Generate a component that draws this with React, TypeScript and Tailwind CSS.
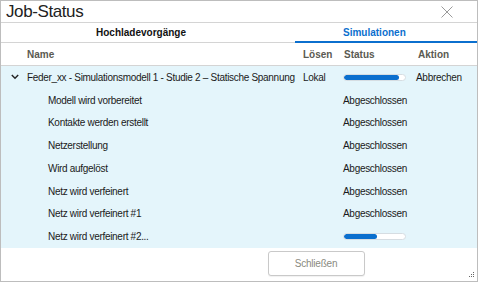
import React from "react";

const font = { fontFamily: '"Liberation Sans", Arial, sans-serif' };

function Progress({ pct }: { pct: number }) {
  return (
    <div className="w-[63px] h-[7px] rounded-full bg-white border border-[#d6dde2] overflow-hidden">
      <div className="h-full rounded-full bg-[#0b6fce]" style={{ width: `${pct}%` }} />
    </div>
  );
}

const subs: { name: string; status: "done" | number }[] = [
  { name: "Modell wird vorbereitet", status: "done" },
  { name: "Kontakte werden erstellt", status: "done" },
  { name: "Netzerstellung", status: "done" },
  { name: "Wird aufgelöst", status: "done" },
  { name: "Netz wird verfeinert", status: "done" },
  { name: "Netz wird verfeinert #1", status: "done" },
  { name: "Netz wird verfeinert #2...", status: 54 },
];

export default function App() {
  return (
    <div
      className="w-[478px] h-[282px] bg-white border border-[#bdbdbd] flex flex-col text-[#1a1a1a] overflow-hidden"
      style={font}
    >
      {/* Title bar */}
      <div className="h-[22px] flex items-center justify-between border-b border-[#d4d4d4] shrink-0">
        <span className="pl-[5px] text-[17px] leading-none tracking-[-0.4px] text-[#222]">Job-Status</span>
        <svg width="12" height="12" viewBox="0 0 12 12" className="mr-[24px] mt-[1px]">
          <path d="M0.5 0.5 L11.5 11.5 M11.5 0.5 L0.5 11.5" stroke="#9a9a9a" strokeWidth="1" />
        </svg>
      </div>
      {/* Tabs */}
      <div className="h-[20px] flex border-b border-[#d4d4d4] shrink-0">
        <div className="w-[294px] pr-[14px] flex items-center justify-center text-[10px] font-bold text-[#111]">
          Hochladevorgänge
        </div>
        <div className="flex-1 flex items-center pl-[48px] text-[10px] font-bold text-[#0b6fce] border-b-2 border-[#0b6fce] mb-[-1px]">
          Simulationen
        </div>
      </div>
      {/* Header */}
      <div className="h-[23px] flex items-center border-b border-[#d4d4d4] text-[10px] font-bold text-[#5a5a52] shrink-0">
        <div className="pl-[26px] w-[302px]">Name</div>
        <div className="w-[41px]">Lösen</div>
        <div className="w-[74px]">Status</div>
        <div>Aktion</div>
      </div>
      {/* Rows */}
      <div className="bg-[#e4f5fb] flex flex-col shrink-0 text-[10px] tracking-[-0.3px] text-[#1a1a1a]">
        <div className="h-[22.75px] flex items-center">
          <div className="w-[26px] flex justify-center pl-[1px]">
            <svg width="8" height="6" viewBox="0 0 8 6">
              <path d="M0.8 1 L4 4.3 L7.2 1" stroke="#222" strokeWidth="1.4" fill="none" />
            </svg>
          </div>
          <div className="w-[276px] whitespace-nowrap">
            Feder_xx - Simulationsmodell 1 - Studie 2 – Statische Spannung
          </div>
          <div className="w-[40px]">Lokal</div>
          <div className="w-[73px]">
            <Progress pct={90} />
          </div>
          <div>Abbrechen</div>
        </div>
        {subs.map((s) => (
          <div key={s.name} className="h-[22.75px] flex items-center">
            <div className="pl-[47px] w-[342px] whitespace-nowrap">{s.name}</div>
            <div>{s.status === "done" ? "Abgeschlossen" : <Progress pct={s.status} />}</div>
          </div>
        ))}
      </div>
      {/* Footer */}
      <div className="flex-1 relative flex items-start justify-center pt-[3px]">
        <button className="ml-[154px] w-[97px] h-[25px] border border-[#c9c9c9] rounded-[3px] bg-white text-[10px] text-[#8a8a80] tracking-[-0.2px] shadow-[0_1px_1px_rgba(0,0,0,0.06)]">
          Schließen
        </button>
        <svg width="6" height="6" viewBox="0 0 6 6" className="absolute right-[2px] bottom-[3px]">
          <rect x="4" y="0" width="1" height="1" fill="#666" />
          <rect x="2" y="2" width="1" height="1" fill="#666" />
          <rect x="4" y="2" width="1" height="1" fill="#666" />
          <rect x="0" y="4" width="1" height="1" fill="#666" />
          <rect x="2" y="4" width="1" height="1" fill="#666" />
          <rect x="4" y="4" width="1" height="1" fill="#666" />
        </svg>
      </div>
    </div>
  );
}
